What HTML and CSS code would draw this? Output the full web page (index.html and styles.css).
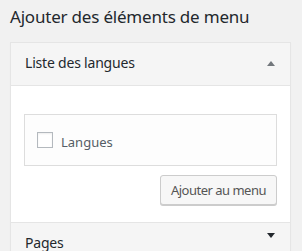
FILE: index.html
```html
<!DOCTYPE html>
<html lang="fr">
<head>
    <meta charset="UTF-8">
    <meta name="viewport" content="width=device-width, initial-scale=1.0">
    <title>Menus</title>
    <link rel="stylesheet" href="styles.css">
</head>
<body>
    <h2 class="title">Ajouter des éléments de menu</h2>

    <div class="accordion">
        <div class="section open">
            <div class="section-title">
                <span>Liste des langues</span>
                <span class="arrow up"></span>
            </div>
            <div class="section-body">
                <div class="tabs-panel">
                    <label class="item">
                        <span class="checkbox"></span>
                        <span class="item-label">Langues</span>
                    </label>
                </div>
                <div class="actions">
                    <button class="button">Ajouter au menu</button>
                </div>
            </div>
        </div>

        <div class="section">
            <div class="section-title">
                <span>Pages</span>
                <span class="arrow down"></span>
            </div>
        </div>
    </div>
</body>
</html>
```
FILE: styles.css
```css
/* General Styles */
body {
    margin: 0;
    padding: 0 10px;
    background-color: #f1f1f1;
    font-family: "Noto Sans", sans-serif;
    color: #23282d;
    overflow: hidden;
}

.title {
    font-size: 17px;
    font-weight: 400;
    letter-spacing: -0.2px;
    margin: 0;
    padding: 4px 0 0;
    height: 38px;
    line-height: 26px;
    color: #23282d;
}

/* Accordion */
.accordion {
    width: 281px;
    box-sizing: border-box;
    border: 1px solid #e5e5e5;
    box-shadow: 0 1px 1px rgba(0, 0, 0, 0.04);
    background-color: #fff;
}

.section-title {
    display: flex;
    justify-content: space-between;
    align-items: center;
    height: 42px;
    padding: 0 15px 0 14px;
    background-color: #f5f5f5;
    border-bottom: 1px solid #e5e5e5;
    font-size: 14px;
    letter-spacing: -0.2px;
    line-height: 18px;
    color: #23282d;
}

.section-title span:first-child {
    margin-bottom: 2px;
}

.section + .section .section-title {
    border-top: 1px solid #e5e5e5;
}

.arrow {
    width: 0;
    height: 0;
    border-left: 4px solid transparent;
    border-right: 4px solid transparent;
}
.arrow.up {
    border-bottom: 5px solid #72777c;
    margin-bottom: 1px;
}
.arrow.down {
    border-top: 5px solid #23282d;
    margin-bottom: 17px;
}

.section-body {
    padding: 28px 13px 17px;
    background-color: #fff;
}

/* Checkbox list */
.tabs-panel {
    height: 50px;
    border: 1px solid #ddd;
    background-color: #fdfdfd;
    display: flex;
    align-items: center;
    padding: 0 12px;
}

.item {
    display: flex;
    align-items: center;
    gap: 8px;
    font-size: 13px;
    color: #555d66;
}

.item-label {
    margin-top: 3px;
}

.checkbox {
    width: 14px;
    height: 14px;
    border: 1px solid #b4b9be;
    background-color: #fff;
    box-shadow: inset 0 1px 2px rgba(0, 0, 0, 0.07);
}

.actions {
    display: flex;
    justify-content: flex-end;
    margin-top: 9px;
}

.button {
    height: 30px;
    padding: 0 10px;
    font-family: inherit;
    font-size: 13px;
    letter-spacing: -0.5px;
    color: #555;
    background-color: #f7f7f7;
    border: 1px solid #ccc;
    border-radius: 3px;
    box-shadow: 0 1px 0 #ccc;
}
```
